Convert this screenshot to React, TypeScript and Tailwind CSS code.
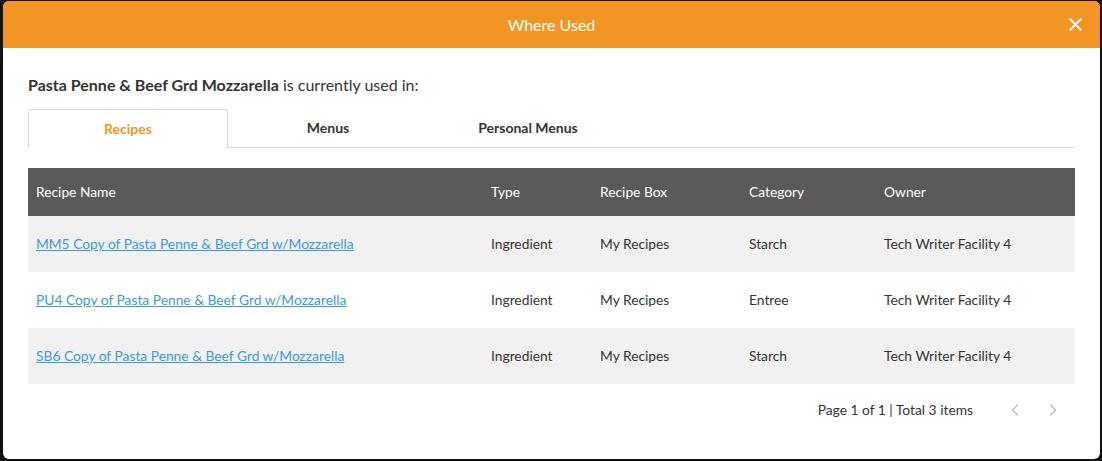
import { X, ChevronLeft, ChevronRight } from 'lucide-react'

const ROWS = [
  { name: 'MM5 Copy of Pasta Penne & Beef Grd w/Mozzarella', type: 'Ingredient', box: 'My Recipes', category: 'Starch', owner: 'Tech Writer Facility 4' },
  { name: 'PU4 Copy of Pasta Penne & Beef Grd w/Mozzarella', type: 'Ingredient', box: 'My Recipes', category: 'Entree', owner: 'Tech Writer Facility 4' },
  { name: 'SB6 Copy of Pasta Penne & Beef Grd w/Mozzarella', type: 'Ingredient', box: 'My Recipes', category: 'Starch', owner: 'Tech Writer Facility 4' },
]

const COLS = 'grid grid-cols-[455px_109px_149px_135px_1fr]'

export default function App() {
  return (
    <div
      className="w-[1102px] h-[461px] bg-[#111] pt-px pl-[3px] pr-[2px] pb-[2px] flex"
      style={{ fontFamily: 'Lato, "Open Sans", sans-serif' }}
    >
      <div className="flex-1 flex flex-col bg-white rounded-[6px] overflow-hidden">
        <div className="h-[47px] shrink-0 bg-[#f29623] flex items-center justify-center relative">
          <span className="text-white text-[16px]">Where Used</span>
          <X className="absolute right-[14px] top-[13px] w-[21px] h-[21px] text-white" strokeWidth={2.2} />
        </div>

        <div className="px-[25px] pt-[26px]">
          <p className="text-[16px] text-[#333] leading-[22px]">
            <span className="font-bold">Pasta Penne &amp; Beef Grd Mozzarella</span> is currently used in:
          </p>

          <div className="flex mt-[13px] h-[39px] border-b border-[#dcdcdc]">
            <div className="w-[200px] flex items-center justify-center pb-[2px] border border-b-0 border-[#d4dae0] rounded-t-[3px] bg-white -mb-px text-[14px] font-bold text-[#f29623]">
              Recipes
            </div>
            <div className="w-[200px] flex items-center justify-center pb-[2px] text-[14px] font-bold text-[#333]">Menus</div>
            <div className="w-[200px] flex items-center justify-center pb-[2px] text-[14px] font-bold text-[#333]">Personal Menus</div>
          </div>

          <div className="mt-[20px] text-[13.8px]">
            <div className={`${COLS} h-[48px] items-center bg-[#5a5a5a] text-white`}>
              <div className="pl-[8px]">Recipe Name</div>
              <div className="pl-[8px]">Type</div>
              <div className="pl-[8px]">Recipe Box</div>
              <div className="pl-[8px]">Category</div>
              <div className="pl-[8px]">Owner</div>
            </div>
            {ROWS.map((r, i) => (
              <div key={r.name} className={`${COLS} h-[56px] items-center text-[#333] ${i % 2 === 0 ? 'bg-[#f1f1f1]' : 'bg-white'}`}>
                <div className="pl-[8px]">
                  <a href="#" className="text-[#3a9ad9] underline">{r.name}</a>
                </div>
                <div className="pl-[8px]">{r.type}</div>
                <div className="pl-[8px]">{r.box}</div>
                <div className="pl-[8px]">{r.category}</div>
                <div className="pl-[8px]">{r.owner}</div>
              </div>
            ))}
          </div>

          <div className="flex items-center justify-end mt-[16px] h-[20px] text-[13.8px] text-[#333]">
            <span>Page 1 of 1 | Total 3 items</span>
            <ChevronLeft className="ml-[32px] w-[20px] h-[20px] text-[#bdbdbd]" strokeWidth={1.6} />
            <ChevronRight className="ml-[18px] mr-[12px] w-[20px] h-[20px] text-[#bdbdbd]" strokeWidth={1.6} />
          </div>
        </div>
      </div>
    </div>
  )
}
